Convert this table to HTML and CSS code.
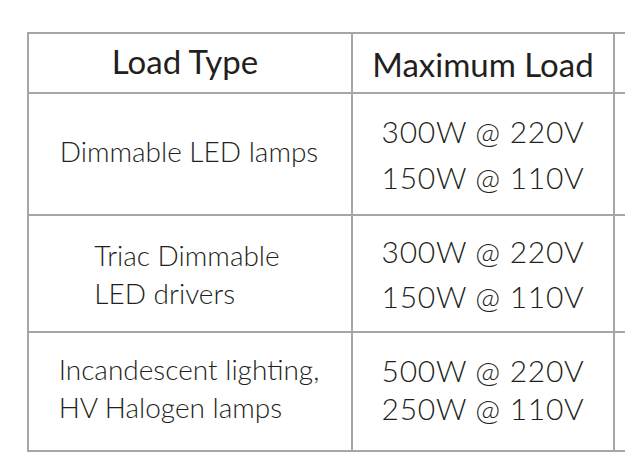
FILE: index.html
```html
<!DOCTYPE html>
<html>
<head>
<meta charset="utf-8">
<link rel="stylesheet" href="styles.css">
</head>
<body>
<div class="table">
  <div class="cell head head-left">Load Type</div>
  <div class="cell head head-right">Maximum Load</div>
  <div class="cell extra"></div>

  <div class="cell left r1"><div class="block">Dimmable LED lamps</div></div>
  <div class="cell right r1"><div class="block">300W @ 220V<br>150W @ 110V</div></div>
  <div class="cell extra"></div>

  <div class="cell left r2"><div class="block">Triac Dimmable<br>LED drivers</div></div>
  <div class="cell right r2"><div class="block">300W @ 220V<br>150W @ 110V</div></div>
  <div class="cell extra"></div>

  <div class="cell left r3"><div class="block">Incandescent lighting,<br>HV Halogen lamps</div></div>
  <div class="cell right r3"><div class="block">500W @ 220V<br>250W @ 110V</div></div>
  <div class="cell extra"></div>
</div>
</body>
</html>
```
FILE: styles.css
```css
html, body {
  margin: 0;
  padding: 0;
  background: #ffffff;
  overflow: hidden;
}
body {
  width: 625px;
  height: 462px;
  font-family: Lato, "Liberation Sans", sans-serif;
  font-weight: 300;
  color: #231f20;
}
.table {
  margin: 32px 0 0 27px;
  display: grid;
  grid-template-columns: 322px 260px 10px;
  grid-template-rows: 58px 120px 115px 117px;
  gap: 2px;
  padding: 2px 0 2px 2px;
  background: #a6a6a6;
  width: max-content;
}
.cell {
  background: #ffffff;
  display: flex;
  align-items: center;
  justify-content: center;
}
.head {
  font-size: 33px;
  font-weight: 400;
}
.head-left {
  padding: 0 10px 4px 0;
}
.head-right {
  padding: 2px 0 0 0;
}
.block {
  text-align: left;
  font-size: 28px;
}
.right .block {
  font-size: 30px;
  letter-spacing: 0.7px;
}
.left .block { padding-right: 2px; }
.r1.right .block { line-height: 46px; }
.r1.left .block { padding-bottom: 6px; }
.r2 .block { line-height: 38px; }
.r2.left .block { padding-right: 6px; }
.r2.right .block { line-height: 45px; }
.r3 .block { line-height: 38px; }
.r3.left .block { padding-bottom: 8px; }
.r3.right .block { padding-bottom: 5px; }
```
